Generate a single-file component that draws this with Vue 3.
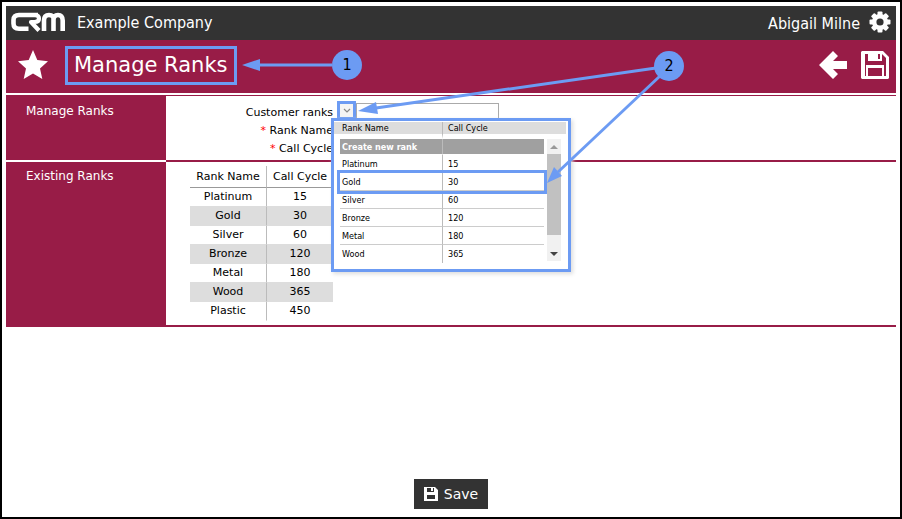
<script setup>
import { ref } from 'vue'

const ranks = [
  { name: 'Platinum', cycle: 15 },
  { name: 'Gold', cycle: 30 },
  { name: 'Silver', cycle: 60 },
  { name: 'Bronze', cycle: 120 },
  { name: 'Metal', cycle: 180 },
  { name: 'Wood', cycle: 365 },
  { name: 'Plastic', cycle: 450 },
]
const listed = ranks.slice(0, 6)
const open = ref(true)
const customerRank = ref('')
const rankName = ref('')
const callCycle = ref('')
</script>

<template>
  <div class="frame">
    <header class="topbar">
      <svg class="logo" viewBox="0 0 54 20" role="img" aria-label="CRM">
        <g fill="none" stroke="#fff" stroke-width="4.600" stroke-linejoin="round">
          <path d="M27 3H8Q2.500 3 2.500 8V11.500Q2.500 16.700 8 16.700H17.500" />
          <path d="M19 3H23.500Q28 3 28 6.500T23.500 10H20L28 18.500" stroke-width="4.200" />
          <path d="M33 19V8.500Q33 3 38 3T42.500 8V19M42.500 8Q42.500 3 47 3T51.700 8.500V19" />
        </g>
      </svg>
      <span class="company">Example Company</span>
      <span class="user">Abigail Milne</span>
      <button class="icon-btn" type="button" aria-label="Settings">
        <svg class="gear" viewBox="0 0 22 22">
          <g fill="#fff">
            <rect v-for="a in [0, 45, 90, 135]" :key="a" x="8.5" y="0.5" width="5" height="21" rx="1" :transform="`rotate(${a} 11 11)`" />
            <circle cx="11" cy="11" r="8" />
          </g>
          <circle cx="11" cy="11" r="3.6" fill="#333" />
        </svg>
      </button>
    </header>

    <div class="titlebar">
      <button class="icon-btn" type="button" aria-label="Favourite">
        <svg class="star" viewBox="0 0 30 30">
          <path fill="#fff" d="M15 0l4.300 10.100 10.700 1.100-8 7.200 2.300 10.600L15 23.500l-9.300 5.500 2.300-10.600-8-7.200 10.700-1.100z" />
        </svg>
      </button>
      <h1>Manage Ranks</h1>
      <button class="icon-btn back" type="button" aria-label="Back">
        <svg class="arrow" viewBox="0 0 28 28">
          <path fill="#fff" d="M0 14L14 0l5 5-5 5h14v8H14l5 5-5 5z" />
        </svg>
      </button>
      <button class="icon-btn" type="button" aria-label="Save ranks">
        <svg class="disk" viewBox="0 0 28 28">
          <path fill="#fff" fill-rule="evenodd" d="M1 0H22L28 6V27L27 28H1L0 27V1zM4 3V25H5V14H23V25H25V7L21 3V10H7V3zM17 3V8H19V3zM7 17V25H21V17z" />
        </svg>
      </button>
    </div>

    <main>
      <section class="block">
        <h2>Manage Ranks</h2>
        <form id="rank-form" class="fields" @submit.prevent>
          <label for="customer-rank">Customer ranks</label>
          <div class="combo">
            <button class="toggle" type="button" aria-label="Show ranks" :aria-expanded="open" @click="open = !open">
              <svg viewBox="0 0 8 6"><path d="M1 1l3 3 3-3" fill="none" stroke="#888" stroke-width="1.200" /></svg>
            </button>
            <input id="customer-rank" v-model="customerRank" type="text" />
            <div v-if="open" class="popup">
              <table class="options">
                <thead>
                  <tr><th>Rank Name</th><th>Call Cycle</th></tr>
                </thead>
                <tbody>
                  <tr class="create"><td>Create new rank</td><td></td></tr>
                  <tr v-for="r in listed" :key="r.name" :class="{ marked: r.name === 'Gold' }">
                    <td>{{ r.name }}</td><td>{{ r.cycle }}</td>
                  </tr>
                </tbody>
              </table>
              <div class="scroll">
                <svg viewBox="0 0 14 15"><path d="M3 10l4-4 4 4z" fill="#999" /></svg>
                <span class="thumb"></span>
                <svg viewBox="0 0 14 15"><path d="M3 6l4 4 4-4z" fill="#444" /></svg>
              </div>
            </div>
          </div>
          <label for="rank-name"><b>*</b> Rank Name</label>
          <input id="rank-name" v-model="rankName" type="text" />
          <label for="call-cycle"><b>*</b> Call Cycle</label>
          <input id="call-cycle" v-model="callCycle" type="text" />
        </form>
      </section>

      <section class="block">
        <h2>Existing Ranks</h2>
        <div class="existing">
          <table class="ranks">
            <thead>
              <tr><th>Rank Name</th><th>Call Cycle</th></tr>
            </thead>
            <tbody>
              <tr v-for="r in ranks" :key="r.name"><td>{{ r.name }}</td><td>{{ r.cycle }}</td></tr>
            </tbody>
          </table>
        </div>
      </section>
    </main>

    <footer>
      <button class="save" type="submit" form="rank-form">
        <svg viewBox="0 0 14 14">
          <path fill="#fff" fill-rule="evenodd" d="M0 0H11L14 3V14H0zM3 1V5H10V1H9V4H7V1zM3 8V12H11V8z" />
        </svg>
        Save
      </button>
    </footer>

    <svg class="callouts" width="700" height="200" viewBox="0 0 700 200">
      <g stroke="#6c9bf3" stroke-width="3">
        <path d="M332 65H258" />
        <path d="M656 68L376 108" />
        <path d="M660 76L558 172" />
      </g>
      <g fill="#6c9bf3">
        <path d="M242 65l18-6v12z" />
        <path d="M358 111l18-9 2 12z" />
        <path d="M547 183l7-16 8 9z" />
        <circle cx="347" cy="65" r="15" />
        <circle cx="669" cy="66" r="15" />
      </g>
      <text x="347" y="70">1</text>
      <text x="669" y="71">2</text>
    </svg>
  </div>
</template>

<style>
body {
  margin: 0;
  background: #fff;
}
</style>

<style scoped>
* {
  box-sizing: border-box;
}
.frame {
  position: relative;
  display: flex;
  flex-direction: column;
  min-height: 100vh;
  padding: 4px;
  border: 2px solid #000;
  color: #000;
  font: 11px/18px Verdana, "DejaVu Sans", sans-serif;
}
button,
input {
  margin: 0;
  padding: 0;
  font: inherit;
}
svg {
  display: block;
}
.icon-btn {
  border: 0;
  background: none;
}
.topbar {
  display: flex;
  align-items: center;
  height: 34px;
  padding: 0 5px 2px;
  background: #333;
  color: #fff;
  font: 16px/20px Tahoma, "DejaVu Sans Condensed", sans-serif;
}
.logo {
  width: 54px;
  height: 20px;
  margin-right: 12px;
}
.company {
  padding-top: 2px;
}
.user {
  margin-left: auto;
  margin-right: 9px;
  padding-top: 3px;
}
.gear {
  width: 22px;
  height: 22px;
}
.titlebar {
  display: flex;
  align-items: center;
  height: 53px;
  padding: 0 7px 3px 12px;
  background: #981c47;
  color: #fff;
}
.star {
  width: 30px;
  height: 30px;
}
h1 {
  margin: 0 auto 0 17px;
  padding: 0 6px;
  border: 3px solid #6c9bf3;
  font-size: 21px;
  font-weight: 400;
  line-height: 33px;
}
.arrow,
.disk {
  width: 28px;
  height: 28px;
}
.back {
  margin-right: 14px;
}
main {
  margin-top: 2px;
}
.block {
  display: grid;
  grid-template-columns: 160px 1fr;
}
.block + .block {
  border-bottom: 2px solid #981c47;
}
h2 {
  margin: 0;
  padding: 7px 20px;
  background: #981c47;
  color: #fff;
  font-size: 12px;
  font-weight: 400;
  line-height: 18px;
}
.block + .block h2 {
  padding-top: 5px;
  border-top: 2px solid #fff;
}
.fields {
  display: grid;
  grid-template-columns: 167px 160px;
  grid-auto-rows: 18px;
  column-gap: 6px;
  padding: 7px 0 3px;
  border-top: 1px solid #981c47;
}
.fields label {
  line-height: 20px;
  text-align: right;
}
.fields b {
  color: #f00;
  font-weight: 400;
}
.fields input {
  width: 100%;
  min-width: 0;
  height: 16px;
  border: 1px solid #aaa;
}
.combo {
  position: relative;
  display: flex;
}
.toggle {
  display: grid;
  place-items: center;
  flex: none;
  width: 19px;
  height: 19px;
  margin: -2px 0 0 -2px;
  border: 3px solid #6c9bf3;
  background: #f4f4f4;
}
.toggle svg {
  width: 8px;
  height: 6px;
}
.popup {
  position: absolute;
  z-index: 1;
  top: 15px;
  left: -8px;
  display: flex;
  gap: 3px;
  width: 240px;
  height: 154px;
  padding: 1px 6px 0;
  border: 3px solid #6c9bf3;
  background: #fff linear-gradient(#ddd, #ddd) 0 1px / 232px 12px no-repeat;
  box-shadow: 2px 2px 4px #ddd;
  font: 9px/16px Tahoma, "DejaVu Sans Condensed", sans-serif;
}
.options {
  width: 204px;
  height: 141px;
  table-layout: fixed;
  border-collapse: separate;
  border-spacing: 0;
}
.options th,
.options td {
  height: 18px;
  padding: 0 2px;
  border-bottom: 1px solid #ccc;
  font-weight: 400;
  text-align: left;
}
.options th {
  height: 17px;
  border-bottom: 5px solid #fff;
  line-height: 12px;
}
.options th:first-child,
.options td:first-child {
  width: 103px;
  border-right: 1px solid #bbb;
}
.options th + th,
.options td + td {
  padding-left: 5px;
}
.options .create td {
  height: 16px;
  background: #a0a0a0;
  border-bottom-color: #fff;
  color: #fff;
  font-weight: 700;
  line-height: 14px;
}
.options tr:last-child td {
  border-bottom: 0;
}
.options thead tr:last-child th {
  border-bottom: 5px solid #fff;
}
.options .marked {
  outline: 3px solid #6c9bf3;
}
.scroll {
  display: flex;
  flex-direction: column;
  width: 14px;
  height: 122px;
  margin-top: 17px;
  background: #f1f1f1;
}
.scroll svg {
  width: 14px;
  height: 15px;
}
.thumb {
  height: 81px;
  margin-bottom: auto;
  background: #c1c1c1;
}
.existing {
  padding: 4px 24px;
  border-top: 2px solid #981c47;
}
.ranks {
  width: 143px;
  table-layout: fixed;
  border-collapse: separate;
  border-spacing: 0;
}
.ranks th,
.ranks td {
  height: 19px;
  padding: 0;
  border-bottom: 1px solid #ddd;
  font-weight: 400;
  text-align: center;
}
.ranks th {
  height: 22px;
  border-bottom-color: #999;
}
.ranks th:first-child,
.ranks td:first-child {
  width: 77px;
  border-right: 1px solid #bbb;
}
.ranks tbody tr:nth-child(even) {
  background: #ddd;
}
.ranks tbody tr:last-child td {
  border-bottom-color: #fff;
}
footer {
  display: flex;
  justify-content: center;
  margin-top: auto;
  padding-bottom: 4px;
}
.save {
  display: flex;
  align-items: center;
  gap: 6px;
  height: 30px;
  padding: 0 10px;
  border: 0;
  background: #333;
  color: #fff;
  font-size: 14px;
}
.save svg {
  width: 14px;
  height: 14px;
}
.callouts {
  position: absolute;
  z-index: 2;
  top: -2px;
  left: -2px;
  pointer-events: none;
}
.callouts text {
  font: 16px Tahoma, "DejaVu Sans Condensed", sans-serif;
  text-anchor: middle;
}
</style>
